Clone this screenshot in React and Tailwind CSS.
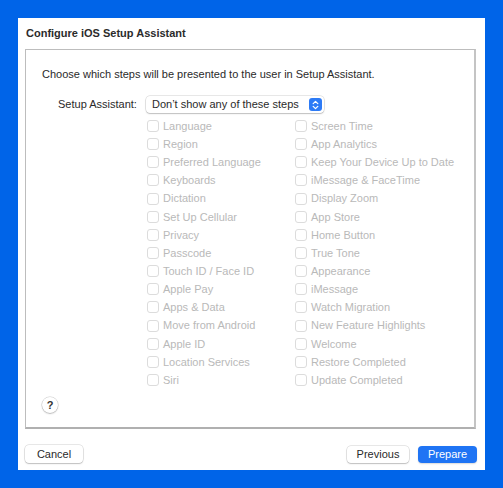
import React from 'react'

const leftSteps = [
  'Language', 'Region', 'Preferred Language', 'Keyboards', 'Dictation', 'Set Up Cellular', 'Privacy',
  'Passcode', 'Touch ID / Face ID', 'Apple Pay', 'Apps & Data', 'Move from Android', 'Apple ID',
  'Location Services', 'Siri'
]

const rightSteps = [
  'Screen Time', 'App Analytics', 'Keep Your Device Up to Date', 'iMessage & FaceTime', 'Display Zoom',
  'App Store', 'Home Button', 'True Tone', 'Appearance', 'iMessage', 'Watch Migration',
  'New Feature Highlights', 'Welcome', 'Restore Completed', 'Update Completed'
]

const StepRow = ({ label }) => (
  <div className="flex h-[18.15px] items-center">
    <span className="h-[12px] w-[12px] shrink-0 rounded-[3px] border border-[#dcdcdc] bg-white" />
    <span className="ml-[4px] whitespace-nowrap text-[11px] text-[#b9b9b9]">{label}</span>
  </div>
)

const StepColumn = ({ steps }) => (
  <div className="flex w-[148px] flex-col">
    {steps.map(s => <StepRow key={s} label={s} />)}
  </div>
)

export default function App() {
  return (
    <div className="h-[488px] w-[503px] bg-[#0064e8] pl-[18px] pt-[18px] font-['Liberation_Sans',Arial,sans-serif] text-[#262626]">
      <div className="flex h-[452px] w-[467px] flex-col bg-white">
        {/* Title */}
        <div className="flex h-[31px] items-center pl-[8px] text-[11px] font-bold text-[#2b2b2b]">
          Configure iOS Setup Assistant
        </div>

        {/* Content box */}
        <div className="ml-[7px] flex h-[380px] w-[451px] flex-col border border-[#bdbdbd] border-b-[#b0b0b0] border-b-2 border-r-2 border-r-[#c4c4c4] bg-white">
          <div className="mt-[17px] pl-[16px] text-[11px] leading-[14px] text-[#2a2a2a]">
            Choose which steps will be presented to the user in Setup Assistant.
          </div>

          <div className="mt-[15px] flex items-center pl-[32px]">
            <span className="w-[88px] text-[11px] text-[#2a2a2a]">Setup Assistant:</span>
            <div className="flex h-[17px] w-[178px] items-center rounded-[4px] bg-white pl-[6px] pr-[2px] shadow-[0_0_0_0.5px_rgba(0,0,0,0.18),0_1px_1.5px_rgba(0,0,0,0.18)]">
              <span className="flex-1 whitespace-nowrap text-[11px] text-[#2a2a2a]">Don’t show any of these steps</span>
              <span className="flex h-[13px] w-[13px] items-center justify-center rounded-[3px] bg-[#2d7bf6]">
                <svg width="7" height="10" viewBox="0 0 7 10" fill="none" stroke="white" strokeWidth="1.3" strokeLinecap="round" strokeLinejoin="round">
                  <path d="M1.2 3.6 L3.5 1.4 L5.8 3.6" />
                  <path d="M1.2 6.4 L3.5 8.6 L5.8 6.4" />
                </svg>
              </span>
            </div>
          </div>

          <div className="mt-[4px] flex pl-[121px]">
            <StepColumn steps={leftSteps} />
            <StepColumn steps={rightSteps} />
          </div>

          <div className="mt-[8px] pl-[16px]">
            <span className="flex h-[16px] w-[16px] items-center justify-center rounded-full bg-white text-[11px] font-bold text-[#333] shadow-[0_0_0_0.5px_rgba(0,0,0,0.2),0_1px_1.5px_rgba(0,0,0,0.2)]">
              ?
            </span>
          </div>
        </div>

        {/* Footer buttons */}
        <div className="mt-[16px] flex items-center pl-[7px] pr-[8px]">
          <button className="flex h-[18px] w-[58px] items-center justify-center rounded-[4px] bg-white text-[11px] text-[#2a2a2a] shadow-[0_0_0_0.5px_rgba(0,0,0,0.18),0_1px_1.5px_rgba(0,0,0,0.18)]">
            Cancel
          </button>
          <div className="flex-1" />
          <button className="flex h-[17px] w-[62px] items-center justify-center rounded-[4px] bg-white text-[11px] text-[#2a2a2a] shadow-[0_0_0_0.5px_rgba(0,0,0,0.18),0_1px_1.5px_rgba(0,0,0,0.18)]">
            Previous
          </button>
          <button className="ml-[9px] flex h-[17px] w-[59px] items-center justify-center rounded-[4px] bg-[#1f74f4] text-[11px] text-white shadow-[0_1px_1.5px_rgba(0,0,0,0.15)]">
            Prepare
          </button>
        </div>
      </div>
    </div>
  )
}
